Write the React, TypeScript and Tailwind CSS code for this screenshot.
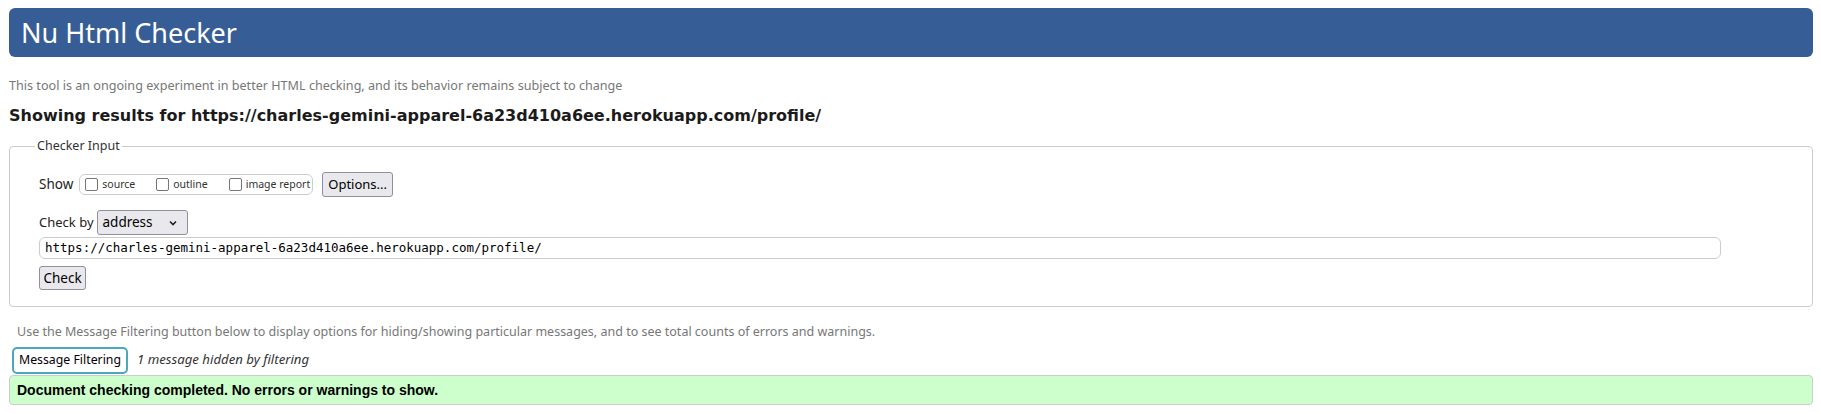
import React from 'react';

const ui = "font-['Noto_Sans',sans-serif]";

function Chevron() {
  return (
    <svg width="10" height="10" viewBox="0 0 10 10" fill="none" stroke="#222" strokeWidth="1.6" aria-hidden="true">
      <polyline points="2,3.5 5,6.5 8,3.5" />
    </svg>
  );
}

function Box({ label }: { label: string }) {
  return (
    <label className="flex items-center gap-[4px] whitespace-nowrap shrink-0">
      <span className="w-[13px] h-[13px] border-[1.5px] border-[#767676] rounded-[2px] bg-white" />
      <span className="text-[10.5px] text-[#333]">{label}</span>
    </label>
  );
}

export default function App() {
  return (
    <div className={`${ui} w-[1821px] h-[414px] bg-white pl-[9px] pr-[8px] pt-[8px] text-[#222]`}>
      <header className="h-[49px] bg-[#365d96] rounded-[6px] flex items-center pl-[12px]">
        <h1 className="text-[27px] text-white leading-none">Nu Html Checker</h1>
      </header>

      <p className="mt-[21px] text-[12.6px] leading-[16px] text-[#777]">
        This tool is an ongoing experiment in better HTML checking, and its behavior remains subject to change
      </p>

      <h2 className="mt-[13px] font-['DejaVu_Sans',sans-serif] font-bold text-[16px] leading-[18px] text-[#1b1b1b]">
        Showing results for https://charles-gemini-apparel-6a23d410a6ee.herokuapp.com/profile/
      </h2>

      <fieldset className="mt-[12px] border border-[#ccc] rounded-[4px] pl-[25px] pr-[30px] pb-[15px] h-[170px]">
        <legend className="px-[2px] text-[12.5px] text-[#333] leading-[18px]">Checker Input</legend>

        <div className="pl-[4px] pt-[17px] flex flex-col">
          <div className="flex items-center h-[25px]">
            <span className="text-[13.5px] text-[#222] mr-[6px]">Show</span>
            <div className="h-[21px] w-[234px] border border-[#ccc] rounded-[6px] flex items-center pl-[5px] gap-[21px]">
              <Box label="source" />
              <Box label="outline" />
              <Box label="image report" />
            </div>
            <button className="ml-[9px] h-[25px] px-[5px] bg-[#e9e9ed] border border-[#8f8f9d] rounded-[3px] text-[13px] text-black">
              Options...
            </button>
          </div>

          <div className="flex items-center h-[25px] mt-[13px]">
            <span className="text-[13px] text-[#222] mr-[3px]">Check by</span>
            <div className="h-[25px] w-[91px] bg-[#e9e9ed] border border-[#8f8f9d] rounded-[3px] flex items-center justify-between pl-[5px] pr-[9px] text-[13.5px] text-black">
              <span>address</span>
              <Chevron />
            </div>
          </div>

          <div className="mt-[2px] h-[22px] w-[1682px] border border-[#ccc] rounded-[6px] flex items-center pl-[5px] font-['DejaVu_Sans_Mono',monospace] text-[12.5px] text-black">
            https://charles-gemini-apparel-6a23d410a6ee.herokuapp.com/profile/
          </div>

          <div className="mt-[6px]">
            <button className="h-[24px] w-[47px] bg-[#e9e9ed] border border-[#8f8f9d] rounded-[3px] text-[13.5px] text-black">
              Check
            </button>
          </div>
        </div>
      </fieldset>

      <p className="mt-[17px] pl-[8px] text-[12.5px] leading-[16px] text-[#777]">
        Use the Message Filtering button below to display options for hiding/showing particular messages, and to see total counts of errors and warnings.
      </p>

      <div className="mt-[6px] flex items-center h-[28px] pl-[3px]">
        <button className="h-[27px] w-[116px] border-2 border-[#4aa8bd] rounded-[5px] bg-white text-[12.3px] text-black">
          Message Filtering
        </button>
        <span className="ml-[9px] italic text-[13.2px] text-[#333]">1 message hidden by filtering</span>
      </div>

      <div className="mt-[1px] h-[30px] bg-[#ccffcc] border border-[#ccc] rounded-[4px] flex items-center pl-[7px]">
        <p className="font-['Liberation_Sans',sans-serif] font-bold text-[14px] text-black">
          Document checking completed. No errors or warnings to show.
        </p>
      </div>
    </div>
  );
}
